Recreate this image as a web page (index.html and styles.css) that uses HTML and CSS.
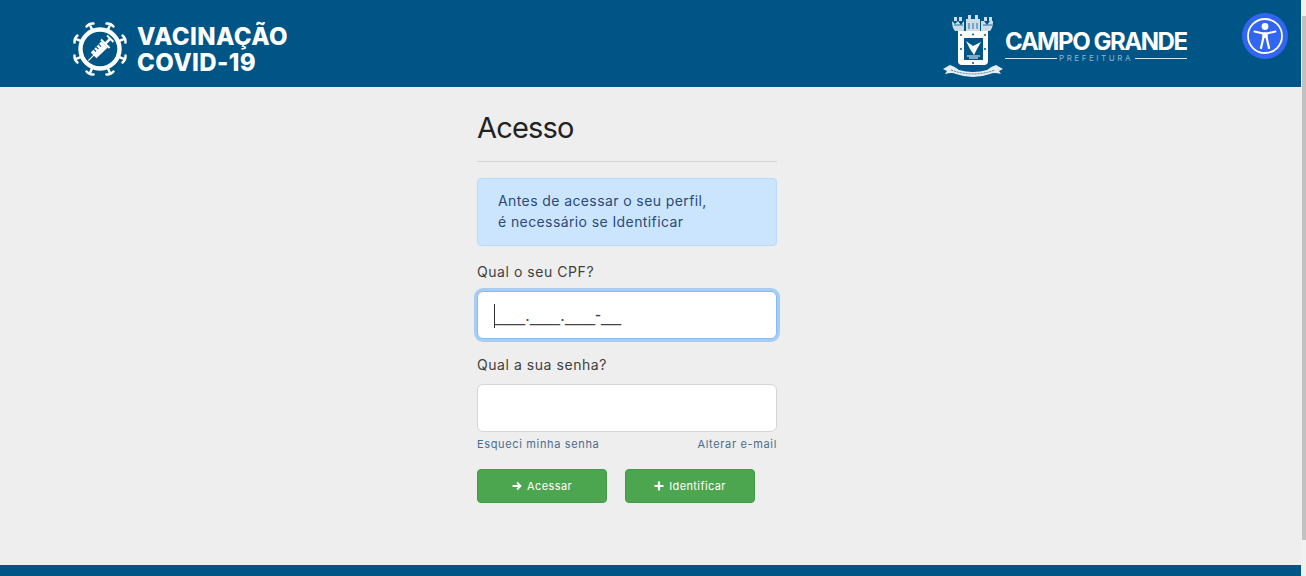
FILE: index.html
```html
<!DOCTYPE html>
<html lang="pt-BR">
<head>
  <meta charset="UTF-8" />
  <title>Vacinação COVID-19 - Acesso</title>
  <link rel="stylesheet" href="styles.css">
</head>
<body>

  <div class="page">
    <header class="topo">
      <div class="marca">
        <svg class="virus" width="60" height="60" viewBox="-30 -30 60 60">
          <circle r="19.500" fill="none" stroke="#fff" stroke-width="4.400"/>
          <g stroke="#fff" fill="none" stroke-width="2.500" stroke-linecap="round">
            <g transform="rotate(22.5)"><path d="M0-21V-26.500M-3.800-26Q0-28 3.800-26"/></g>
            <g transform="rotate(67.5)"><path d="M0-21V-26.500M-3.800-26Q0-28 3.800-26"/></g>
            <g transform="rotate(112.5)"><path d="M0-21V-26.500M-3.800-26Q0-28 3.800-26"/></g>
            <g transform="rotate(157.5)"><path d="M0-21V-26.500M-3.800-26Q0-28 3.800-26"/></g>
            <g transform="rotate(202.5)"><path d="M0-21V-26.500M-3.800-26Q0-28 3.800-26"/></g>
            <g transform="rotate(247.5)"><path d="M0-21V-26.500M-3.800-26Q0-28 3.800-26"/></g>
            <g transform="rotate(292.5)"><path d="M0-21V-26.500M-3.800-26Q0-28 3.800-26"/></g>
            <g transform="rotate(337.5)"><path d="M0-21V-26.500M-3.800-26Q0-28 3.800-26"/></g>
          </g>
          <g transform="rotate(45)" fill="#fff">
            <path d="M-.6 16.500H.6V8H-.6Z"/>
            <path d="M-4 9H4L4.500-6.500H-4.500Z"/>
            <path d="M-6-8.500H6V-6.500H-6Z"/>
            <path d="M-1.300-14H1.300V-8H-1.300Z"/>
            <path d="M-4.500-15.500H4.500V-13.500H-4.500Z"/>
            <path d="M-4.500-3H-1V-1.800H-4.500ZM-4.500 .5H-1V1.700H-4.500ZM-4.500 4H-1V5.200H-4.500Z" fill="#005587"/>
          </g>
        </svg>
        <div class="marca-texto">VACINAÇÃO<br>COVID-19</div>
      </div>

      <div class="prefeitura">
        <svg class="brasao" width="64" height="66" viewBox="0 0 64 66">
          <!-- coroa -->
          <g fill="#fff" opacity=".8">
            <path d="M10 7L13 10L16 7L19 11L22 7V17H13Q10 14 10 7Z"/>
            <path d="M42 7L45 11L48 7L51 7Q51 14 48 17H39V7Z"/>
            <path d="M24 5H38V17H24Z"/>
            <path d="M12 3H15V7H12ZM17 3H20V7H17ZM26 1H29V5H26ZM33 1H36V5H33ZM42 3H45V7H42ZM47 3H50V7H47Z"/>
          </g>
          <path d="M12 11H21M27 9V15M31 9V15M35 9V15M41 11H50" stroke="#005587" stroke-width="1" opacity=".8"/>
          <!-- escudo -->
          <path d="M16 17H46V47Q46 51 42 51H20Q16 51 16 47Z" fill="#fff"/>
          <rect x="22" y="24" width="19" height="22" fill="#005587"/>
          <path d="M24 27L31 32L39 28L35 35L32 41L28 35Z" fill="#fff"/>
          <path d="M25 42H38M27 44H36" stroke="#fff" stroke-width="1"/>
          <g fill="#005587">
            <circle cx="19" cy="21" r="1"/><circle cx="43" cy="21" r="1"/>
            <circle cx="19" cy="35" r="1"/><circle cx="43" cy="35" r="1"/>
            <circle cx="31" cy="20.500" r="1"/><circle cx="31" cy="49" r="1"/>
          </g>
          <!-- faixa -->
          <path d="M1 55L8 51Q14 53 17 56Q31 60 45 56Q48 53 54 51L61 55L57 57L59 60Q52 58 48 60Q31 66 14 60Q10 58 3 60L5 57Z" fill="#fff" opacity=".9"/>
          <path d="M9 56Q31 64 53 56" fill="none" stroke="#005587" stroke-width="1" stroke-dasharray="2 1" opacity=".7"/>
        </svg>
        <div class="prefeitura-texto">
          <div class="prefeitura-nome">CAMPO GRANDE</div>
          <div class="prefeitura-sub">PREFEITURA</div>
        </div>
      </div>

      <button class="acessibilidade" type="button" aria-label="Acessibilidade">
        <svg width="36" height="36" viewBox="0 0 36 36">
          <circle cx="18" cy="18" r="17" fill="none" stroke="#fff" stroke-width="1.800"/>
          <circle cx="18" cy="8.500" r="3.400" fill="#fff"/>
          <g fill="none" stroke="#fff" stroke-linecap="round">
            <path d="M7.500 13.500L15 15.300H21L28.500 13.500" stroke-width="2"/>
            <path d="M18 15.500V20" stroke-width="5.500" stroke-linecap="butt"/>
            <path d="M16.300 20L14 30M19.700 20L22 30" stroke-width="2.200"/>
          </g>
        </svg>
      </button>
    </header>

    <main class="conteudo">
      <form class="acesso">
        <h1>Acesso</h1>
        <hr>
        <div class="aviso">Antes de acessar o seu perfil,<br>é necessário se Identificar</div>

        <label for="cpf">Qual o seu CPF?</label>
        <div class="campo-cpf">
          <input class="campo campo-mascara foco" id="cpf" type="text" value="___.___.___-__">
          <span class="cursor"></span>
        </div>

        <label for="senha">Qual a sua senha?</label>
        <input class="campo" id="senha" type="password">

        <div class="links">
          <a href="#">Esqueci minha senha</a>
          <a href="#">Alterar e-mail</a>
        </div>

        <div class="botoes">
          <button type="button" class="botao">
            <svg width="10" height="10" viewBox="0 0 10 10"><path d="M.5 5H8.500M5 1.500L8.500 5L5 8.500" fill="none" stroke="#fff" stroke-width="1.800"/></svg>
            Acessar
          </button>
          <button type="button" class="botao">
            <svg width="10" height="10" viewBox="0 0 10 10"><path d="M5 .5V9.500M.5 5H9.500" fill="none" stroke="#fff" stroke-width="2.200"/></svg>
            Identificar
          </button>
        </div>
      </form>
    </main>

    <footer class="rodape"></footer>
  </div>

  <div class="barra"><div class="barra-pega"></div></div>

</body>
</html>
```

FILE: styles.css
```css
* {
  box-sizing: border-box;
}

html,
body {
  height: 576px;
  margin: 0;
  overflow: hidden;
}

body {
  display: flex;
  background-color: #f1f1f1;
  color: #333;
  font-family: Inter, "Open Sans", sans-serif;
}

.page {
  position: relative;
  flex: 1;
  display: flex;
  flex-direction: column;
}

/* topo */
.topo {
  height: 87px;
  padding: 0 114px 0 71px;
  display: flex;
  justify-content: space-between;
  align-items: center;
  background-color: #005587;
  color: white;
}

.marca {
  display: flex;
  align-items: center;
  gap: 7px;
  margin-left: -1px;
  margin-top: 10px;
}

.marca-texto {
  font-size: 24px;
  font-weight: 800;
  line-height: 26px;
  letter-spacing: .4px;
  margin-top: 3px;
}

.prefeitura {
  display: flex;
  align-items: flex-end;
  margin-top: 7px;
}

.brasao {
  margin-right: -2px;
}

.prefeitura-texto {
  width: 182px;
  margin-bottom: 17px;
  margin-left: 1px;
}

.prefeitura-nome {
  font-size: 24px;
  font-weight: 700;
  line-height: 24px;
  letter-spacing: -1.45px;
  white-space: nowrap;
}

.prefeitura-sub {
  display: flex;
  align-items: center;
  gap: 2px;
  font-size: 8px;
  line-height: 9px;
  letter-spacing: 2.55px;
  color: #8fb4cf;
}

.prefeitura-sub::before,
.prefeitura-sub::after {
  content: "";
  flex: 1;
  height: 1px;
  background-color: #d5e3ee;
}

.acessibilidade {
  position: absolute;
  top: 13px;
  left: 1242px;
  width: 46px;
  height: 46px;
  padding: 0;
  display: flex;
  align-items: center;
  justify-content: center;
  border: none;
  border-radius: 50%;
  background-color: #3366f0;
}

/* conteudo */
.conteudo {
  flex: 1;
  padding-top: 23px;
  background-color: #eeeeee;
}

.acesso {
  width: 300px;
  margin-left: 477px;
}

h1 {
  margin: 0;
  font-size: 29px;
  font-weight: 400;
  line-height: 36px;
  letter-spacing: -.8px;
  color: #222;
}

hr {
  height: 1px;
  margin: 15px 0 16px;
  border: none;
  background-color: #d6d6d6;
}

.aviso {
  height: 68px;
  padding: 11px 20px;
  font-size: 14px;
  line-height: 21px;
  letter-spacing: .4px;
  color: #2b4a78;
  background-color: #cce5ff;
  border: 1px solid #b8daff;
  border-radius: 4px;
}

label {
  display: block;
  margin-top: 15px;
  margin-bottom: 9px;
  font-size: 14px;
  line-height: 21px;
  letter-spacing: .55px;
  color: #3f3f3f;
}

.campo {
  display: block;
  width: 300px;
  height: 48px;
  padding: 0 17px;
  font-family: Inter, sans-serif;
  font-size: 14px;
  color: #444;
  background-color: white;
  border: 1px solid #d4d4d4;
  border-radius: 6px;
  outline: none;
}

.campo-mascara {
  font-family: "Liberation Sans", sans-serif;
  font-size: 18px;
}

.campo.foco {
  border-color: #80bdff;
  box-shadow: 0 0 0 3px #a8cdf5;
}

.campo-cpf {
  position: relative;
  margin-bottom: 15px;
}

.campo-cpf + label {
  margin-top: 0;
}

.cursor {
  position: absolute;
  top: 13px;
  left: 17px;
  width: 1px;
  height: 24px;
  background-color: #333;
}

.links {
  display: flex;
  justify-content: space-between;
  margin-top: 5px;
  font-size: 11px;
  line-height: 14px;
  letter-spacing: .65px;
}

.links a {
  color: #4a6d8c;
  text-decoration: none;
}

.botoes {
  display: flex;
  gap: 18px;
  margin-top: 18px;
}

.botao {
  width: 130px;
  height: 34px;
  display: flex;
  align-items: center;
  justify-content: center;
  gap: 5px;
  font-family: Inter, sans-serif;
  font-size: 11px;
  letter-spacing: .4px;
  color: white;
  background-color: #4ca64f;
  border: 1px solid #439a47;
  border-radius: 4px;
}

.rodape {
  height: 11px;
  background-color: #005587;
}

/* barra de rolagem */
.barra {
  width: 5px;
  padding-top: 16px;
  padding-left: 1px;
}

.barra-pega {
  height: 524px;
  background-color: #c1c1c1;
}
```
